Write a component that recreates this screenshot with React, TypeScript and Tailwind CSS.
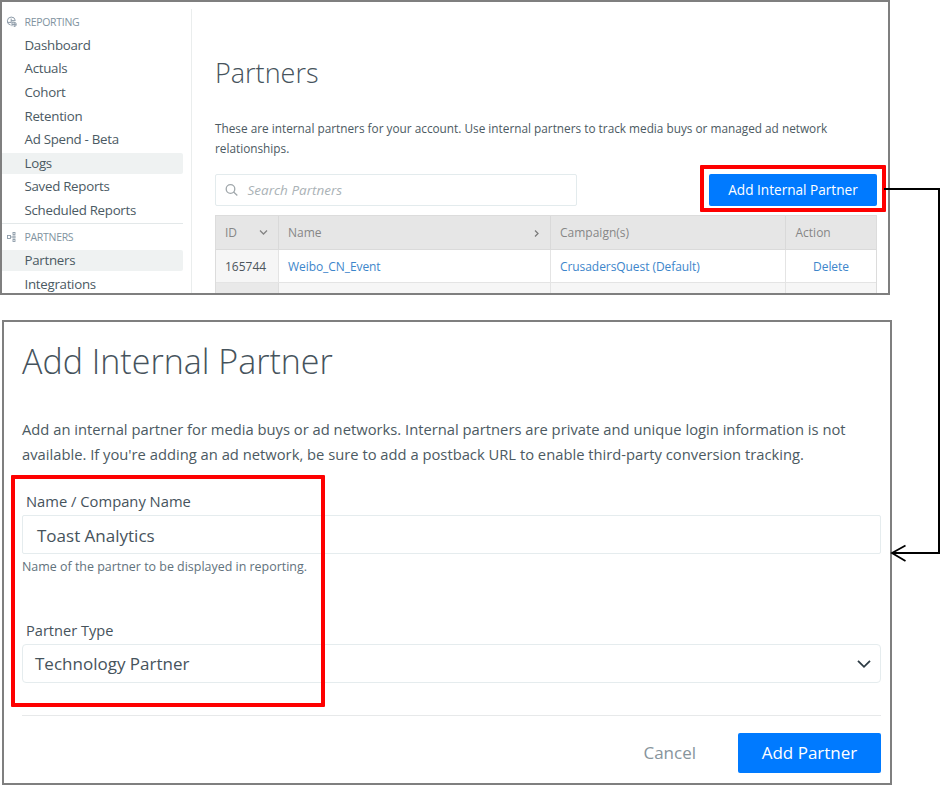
import type { ReactNode } from "react";

function NavItem({ label, active = false }: { label: string; active?: boolean }) {
  return (
    <li className="flex h-[23.6px] items-center">
      <a
        className={
          active
            ? "flex h-[21.4px] w-[181px] items-center rounded-r-[2px] bg-[#eff2f2] pl-[22.5px] text-[#4b5a63]"
            : "flex h-[21.4px] w-[181px] items-center pl-[22.5px] text-[#4b5a63]"
        }
      >
        {label}
      </a>
    </li>
  );
}

function NavHeading({ icon, label }: { icon: ReactNode; label: string }) {
  return (
    <div className="flex h-[23px] items-center text-[10.5px] tracking-[-0.3px] text-[#8193a0]">
      <span className="w-[22.5px] pl-[4px]">{icon}</span>
      <span>{label}</span>
    </div>
  );
}

function ReportingIcon() {
  return (
    <svg width="12" height="12" viewBox="0 0 12 12" fill="none" stroke="#8d9ba8" strokeWidth="1">
      <path d="M4.6 9A4 4 0 1 1 9.3 4.4M1.4 6.4h3.8V2.6M5.2 4.6h4.2" />
      <path d="M6 6v4.2M6 6.2h2.2v4.6M8.2 6.3a2.1 2.1 0 0 1 0 4.2M6 8.4h4" />
    </svg>
  );
}

function PartnersIcon() {
  return (
    <svg width="12" height="12" viewBox="0 0 12 12" fill="none" stroke="#8d9ba8" strokeWidth="0.9">
      <rect x="1.5" y="4.5" width="3" height="3" />
      <path d="M4.5 6h2" />
      <rect x="7" y="1.5" width="2" height="2" />
      <rect x="7" y="5" width="2" height="2" />
      <rect x="7" y="8.5" width="2" height="2" />
    </svg>
  );
}

function Sidebar() {
  return (
    <nav className="w-[181px] shrink-0 pt-[8.6px] text-[13.3px] leading-none tracking-[-0.28px]">
      <NavHeading icon={<ReportingIcon />} label="REPORTING" />
      <ul>
        <NavItem label="Dashboard" />
        <NavItem label="Actuals" />
        <NavItem label="Cohort" />
        <NavItem label="Retention" />
        <NavItem label="Ad Spend - Beta" />
        <NavItem label="Logs" active />
        <NavItem label="Saved Reports" />
        <NavItem label="Scheduled Reports" />
      </ul>
      <div className="mt-[0.6px] h-px bg-[#e3e8e9]" />
      <div className="h-[2px]" />
      <NavHeading icon={<PartnersIcon />} label="PARTNERS" />
      <ul>
        <NavItem label="Partners" active />
        <NavItem label="Integrations" />
      </ul>
    </nav>
  );
}

function PartnersTable() {
  return (
    <div className="mt-[9px] w-[662px] border-x border-t border-[#dcdcdc] text-[12px] leading-none">
      <div className="grid h-[34px] grid-cols-[63px_272px_235px_90px] border-b border-[#dadada] bg-[#e6e6e6] text-[#868686]">
        <div className="flex items-center justify-between border-r border-[#d9d9d9] pr-[10px] pl-[9px]">
          <span>ID</span>
          <svg width="9" height="7" viewBox="0 0 9 7" fill="none" stroke="#848484" strokeWidth="1.3">
            <path d="M1 1.5l3.5 3.5L8 1.5" />
          </svg>
        </div>
        <div className="flex items-center justify-between border-r border-[#d9d9d9] pr-[10px] pl-[9px]">
          <span>Name</span>
          <svg className="mt-[2px]" width="7" height="9" viewBox="0 0 7 9" fill="none" stroke="#7c7c7c" strokeWidth="1.3">
            <path d="M2 1.5l3 3-3 3" />
          </svg>
        </div>
        <div className="flex items-center border-r border-[#d9d9d9] pl-[9px]">Campaign(s)</div>
        <div className="flex items-center pl-[9.5px]">Action</div>
      </div>
      <div className="grid h-[33px] grid-cols-[63px_272px_235px_90px] border-b border-[#e4e4e4] tracking-[-0.07px] text-[#3d86cb]">
        <div className="flex items-center border-r border-[#e4e4e4] bg-[#f6f6f6] pt-px pl-[9px] tracking-normal text-[#4c555c]">165744</div>
        <div className="flex items-center border-r border-[#e4e4e4] pt-px pl-[9px]">Weibo_CN_Event</div>
        <div className="flex items-center border-r border-[#e4e4e4] pt-px pl-[9px]">CrusadersQuest (Default)</div>
        <div className="flex items-center justify-center pt-px">Delete</div>
      </div>
      <div className="grid h-[12px] grid-cols-[63px_272px_235px_90px] bg-[#f6f6f6]">
        <div className="border-r border-[#dedede] bg-[#e9e9e9]" />
        <div className="border-r border-[#e4e4e4]" />
        <div className="border-r border-[#e4e4e4]" />
        <div />
      </div>
    </div>
  );
}

function PartnersPanel() {
  return (
    <section className="flex h-[295px] w-[890px] overflow-hidden border-2 border-[#7f7f7f] bg-white">
      <Sidebar />
      <main className="mt-[7px] ml-[8px] flex-1 border-l border-[#eaeded] pl-[23px]">
        <h1 className="mt-[46px] text-[27px] leading-[36px] font-light text-[#46535c]">Partners</h1>
        <p className="mt-[27px] w-[662px] text-[11.8px] leading-[20px] whitespace-nowrap text-[#4c5a62]">
          These are internal partners for your account. Use internal partners to track media buys or managed ad network
          <br />
          relationships.
        </p>
        <div className="mt-[16px] flex h-[32px] w-[662px] items-center justify-between">
          <div className="flex h-[32px] w-[362px] items-center rounded-[2px] border border-[#e3ebed] pl-[9px] text-[13.5px] text-[#aab2b6] italic">
            <svg className="mr-[9.5px]" width="13" height="13" viewBox="0 0 13 13" fill="none" stroke="#a0a7ab" strokeWidth="1.3">
              <circle cx="5.5" cy="5" r="4.3" />
              <path d="M8.6 8.1l3.7 3.4" />
            </svg>
            Search Partners
          </div>
          <button className="h-[32px] w-[168px] rounded-[2px] bg-[#007aff] text-[13.6px] text-white">Add Internal Partner</button>
        </div>
        <PartnersTable />
      </main>
    </section>
  );
}

function AddPartnerPanel() {
  return (
    <section className="mt-[25px] ml-[2px] h-[465px] w-[890px] border-2 border-[#7f7f7f] bg-white px-[18px] text-[#46535c]">
      <h2 className="mt-[15px] w-[859px] text-[34px] leading-[48px] font-light">Add Internal Partner</h2>
      <p className="mt-[32px] w-[859px] text-[14.75px] leading-[25px] whitespace-nowrap text-[#4c5a62]">
        Add an internal partner for media buys or ad networks. Internal partners are private and unique login information is not
        <br />
        available. If you're adding an ad network, be sure to add a postback URL to enable third-party conversion tracking.
      </p>
      <div className="mt-[24px] pl-[4px] text-[14.75px] leading-[20px]">Name / Company Name</div>
      <div className="mt-[4px] flex h-[39px] w-[859px] items-center rounded-[2px] border border-[#e5ecee] pt-[2px] pl-[14px] text-[17px]">
        Toast Analytics
      </div>
      <div className="mt-[4px] text-[12.45px] leading-[18px] text-[#62727c]">Name of the partner to be displayed in reporting.</div>
      <div className="mt-[44px] pl-[4px] text-[14.6px] leading-[20px]">Partner Type</div>
      <div className="mt-[4px] flex h-[39px] w-[859px] items-center justify-between rounded-[4px] border border-[#e5ecee] pr-[9px] pl-[12px] text-[17px]">
        Technology Partner
        <svg width="14" height="10" viewBox="0 0 14 10" fill="none" stroke="#2d3b44" strokeWidth="1.8">
          <path d="M1 1.8l6 6 6-6" />
        </svg>
      </div>
      <div className="mt-[32px] h-px w-[859px] bg-[#e7e9ea]" />
      <div className="mt-[17px] flex w-[859px] items-center justify-end">
        <button className="mr-[42px] text-[17px] text-[#87949c]">Cancel</button>
        <button className="h-[40px] w-[143px] rounded-[2px] bg-[#007aff] text-[17px] text-white">Add Partner</button>
      </div>
    </section>
  );
}

export default function App() {
  return (
    <div className="relative h-[785px] w-[940px] overflow-hidden bg-white font-['Open_Sans','Noto_Sans',sans-serif]">
      <PartnersPanel />
      <AddPartnerPanel />
      <div className="absolute top-[165px] left-[700px] h-[47px] w-[186px] rounded-[1px] border-4 border-[#fe0000]" />
      <div className="absolute top-[475px] left-[11px] h-[232px] w-[314px] rounded-[1px] border-4 border-[#fe0000]" />
      <svg className="absolute top-0 left-0" width="940" height="785" fill="none" stroke="#000" strokeWidth="2">
        <path d="M884 189H939V553H892" />
        <path d="M905.5 545.5L892 553l13.5 8" strokeWidth="1.8" />
      </svg>
    </div>
  );
}
